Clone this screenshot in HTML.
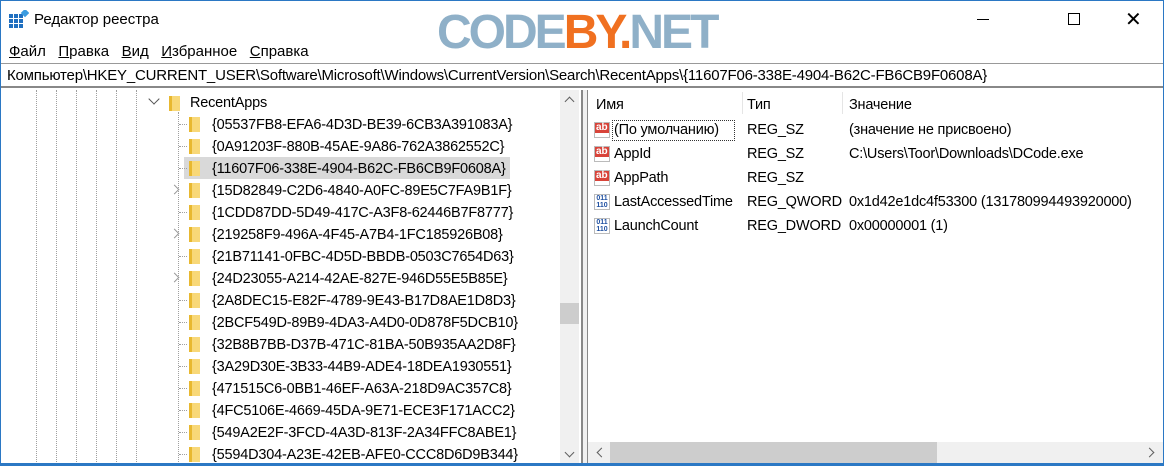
<html><head><style>
body{margin:0;width:1164px;height:466px;overflow:hidden;background:#fff;font-family:"Liberation Sans",sans-serif;font-size:14px;color:#000;position:relative}
.a{position:absolute;white-space:nowrap}
.t{font-size:14.5px;letter-spacing:-0.2px}
.dl{position:absolute;top:90px;height:372px;border-left:1px dotted #a0a0a0}
.f{position:absolute;width:11px;height:15px;background:linear-gradient(90deg,#e8b830 0 3px,#f8d878 3px)}
.chev{position:absolute;width:6px;height:6px;border-right:1.5px solid #999;border-top:1.5px solid #999;transform:rotate(45deg)}
.hd{position:absolute;width:8px;border-top:1px dotted #a0a0a0}
</style></head><body>
<div class="a" style="left:0;top:0;width:1164px;height:1px;background:#2b78c4"></div>
<div class="a" style="left:0;top:0;width:1px;height:466px;background:#2b78c4"></div>
<div class="a" style="right:0;top:0;width:1px;height:466px;background:#2b78c4"></div>
<div class="a" style="left:0;top:463px;width:1164px;height:3px;background:#2b78c4"></div>
<svg class="a" style="left:9px;top:10px" width="20" height="18"><rect x="0" y="4" width="14" height="14" fill="#1f6fc0"/><g stroke="#fff" stroke-width="1"><line x1="4.5" y1="4" x2="4.5" y2="18"/><line x1="9.5" y1="4" x2="9.5" y2="18"/><line x1="0" y1="8.5" x2="14" y2="8.5"/><line x1="0" y1="13.5" x2="14" y2="13.5"/></g><rect x="13" y="0" width="6" height="6" fill="#3a9be0" transform="rotate(45 16 3)"/></svg>
<div class="a" style="left:34px;top:11px;font-size:15px">Редактор реестра</div>
<div class="a" style="left:437px;top:5px;font-size:48px;font-weight:bold;letter-spacing:-3px;color:#8fb0c8">CODE<span style="color:#f07020">BY.</span>NET</div>
<div class="a" style="left:977px;top:19px;width:12px;height:1px;background:#000"></div>
<div class="a" style="left:1068px;top:13px;width:10px;height:10px;border:1px solid #000"></div>
<div class="a" style="left:1125px;top:7px;font-size:20px;font-weight:300">✕</div>
<div class="a" style="left:9px;top:43px;font-size:15px"><u>Ф</u>айл&nbsp;&nbsp; <u>П</u>равка&nbsp;&nbsp; <u>В</u>ид&nbsp;&nbsp; <u>И</u>збранное&nbsp;&nbsp; <u>С</u>правка</div>
<div class="a" style="left:1px;top:63px;width:1162px;height:25px;border-top:1px solid #999;border-bottom:2px solid #888;box-sizing:border-box"></div>
<div class="a" style="left:7px;top:67px;font-size:15px;letter-spacing:-0.2px">Компьютер\HKEY_CURRENT_USER\Software\Microsoft\Windows\CurrentVersion\Search\RecentApps\{11607F06-338E-4904-B62C-FB6CB9F0608A}</div>
<div class="dl" style="left:36px"></div><div class="dl" style="left:56px"></div><div class="dl" style="left:76px"></div><div class="dl" style="left:96px"></div><div class="dl" style="left:116px"></div><div class="dl" style="left:136px"></div>
<div class="dl" style="left:178px;top:112px;height:350px"></div>
<div class="a" style="left:184px;top:157px;width:326px;height:22px;background:#d9d9d9"></div>
<div class="a" style="left:150px;top:95px;width:7px;height:7px;border-right:1.5px solid #555;border-bottom:1.5px solid #555;transform:rotate(45deg)"></div>
<div class="f" style="left:169px;top:96px"></div>
<div class="a t" style="left:190px;top:95px">RecentApps</div>
<div id="tree"></div>
<div class="a" style="left:560px;top:90px;width:19px;height:373px;background:#f0f0f0"></div>
<div class="a" style="left:560px;top:303px;width:19px;height:21px;background:#cdcdcd"></div>
<div class="a" style="left:566px;top:98px;width:6px;height:6px;border-left:1.5px solid #606060;border-top:1.5px solid #606060;transform:rotate(45deg)"></div>
<div class="a" style="left:566px;top:449px;width:6px;height:6px;border-right:1.5px solid #606060;border-bottom:1.5px solid #606060;transform:rotate(45deg)"></div>
<div class="a" style="left:581px;top:90px;width:2px;height:373px;background:#888"></div>
<div class="a" style="left:583px;top:90px;width:4px;height:373px;background:#f0f0f0"></div>
<div class="a" style="left:587px;top:90px;width:1px;height:373px;background:#888"></div>
<div class="a" style="left:742px;top:92px;width:1px;height:22px;background:#e5e5e5"></div>
<div class="a" style="left:842px;top:92px;width:1px;height:22px;background:#e5e5e5"></div>
<div class="a t" style="left:596px;top:97px">Имя</div>
<div class="a t" style="left:747px;top:97px">Тип</div>
<div class="a t" style="left:849px;top:97px">Значение</div>
<div class="a" style="left:612px;top:120px;width:123px;height:21px;border:1px dotted #333;box-sizing:border-box"></div>
<div id="list"></div>
<div class="a" style="left:588px;top:442px;width:575px;height:21px;background:#f0f0f0"></div>
<div class="a" style="left:610px;top:442px;width:327px;height:21px;background:#cdcdcd"></div>
<div class="a" style="left:598px;top:449px;width:6px;height:6px;border-left:1.5px solid #606060;border-bottom:1.5px solid #606060;transform:rotate(45deg)"></div>
<div class="a" style="left:1146px;top:449px;width:6px;height:6px;border-right:1.5px solid #606060;border-top:1.5px solid #606060;transform:rotate(45deg)"></div>
<script>
var k=["{05537FB8-EFA6-4D3D-BE39-6CB3A391083A}","{0A91203F-880B-45AE-9A86-762A3862552C}","{11607F06-338E-4904-B62C-FB6CB9F0608A}","{15D82849-C2D6-4840-A0FC-89E5C7FA9B1F}","{1CDD87DD-5D49-417C-A3F8-62446B7F8777}","{219258F9-496A-4F45-A7B4-1FC185926B08}","{21B71141-0FBC-4D5D-BBDB-0503C7654D63}","{24D23055-A214-42AE-827E-946D55E5B85E}","{2A8DEC15-E82F-4789-9E43-B17D8AE1D8D3}","{2BCF549D-89B9-4DA3-A4D0-0D878F5DCB10}","{32B8B7BB-D37B-471C-81BA-50B935AA2D8F}","{3A29D30E-3B33-44B9-ADE4-18DEA1930551}","{471515C6-0BB1-46EF-A63A-218D9AC357C8}","{4FC5106E-4669-45DA-9E71-ECE3F171ACC2}","{549A2E2F-3FCD-4A3D-813F-2A34FFC8ABE1}","{5594D304-A23E-42EB-AFE0-CCC8D6D9B344}"];
var ex={3:1,5:1,7:1},h="";
k.forEach(function(s,i){var y=124+i*22;
h+=ex[i]?'<div class="chev" style="left:171px;top:'+(y-4)+'px"></div>':'<div class="hd" style="left:179px;top:'+y+'px"></div>';
h+='<div class="f" style="left:189px;top:'+(y-7)+'px"></div><div class="a t" style="left:212px;top:'+(y-7)+'px">'+s+'</div>';});
document.getElementById("tree").innerHTML=h;
var r=[["ab","(По умолчанию)","REG_SZ","(значение не присвоено)"],["ab","AppId","REG_SZ","C:\\Users\\Toor\\Downloads\\DCode.exe"],["ab","AppPath","REG_SZ",""],["01","LastAccessedTime","REG_QWORD","0x1d42e1dc4f53300 (131780994493920000)"],["01","LaunchCount","REG_DWORD","0x00000001 (1)"]];
h="";r.forEach(function(a,i){var y=122+i*24;
h+=a[0]=="ab"?'<div class="a" style="left:594px;top:'+y+'px;width:16px;height:16px;background:#fff;border:1px solid #bbb;box-sizing:border-box"><div style="background:#d8443a;color:#fff;font-size:10px;font-weight:bold;line-height:10px;padding:0 1px">ab</div></div>':'<div class="a" style="left:594px;top:'+y+'px;width:16px;height:16px;border:1px solid #bbb;box-sizing:border-box;font-size:7px;line-height:7px;color:#1e4fa0;font-weight:bold;text-align:center">011<br>110</div>';
h+='<div class="a t" style="left:614px;top:'+(y)+'px">'+a[1]+'</div><div class="a t" style="left:747px;top:'+(y)+'px">'+a[2]+'</div><div class="a t" style="left:849px;top:'+(y)+'px">'+a[3]+'</div>';});
document.getElementById("list").innerHTML=h;
</script>
</body></html>
